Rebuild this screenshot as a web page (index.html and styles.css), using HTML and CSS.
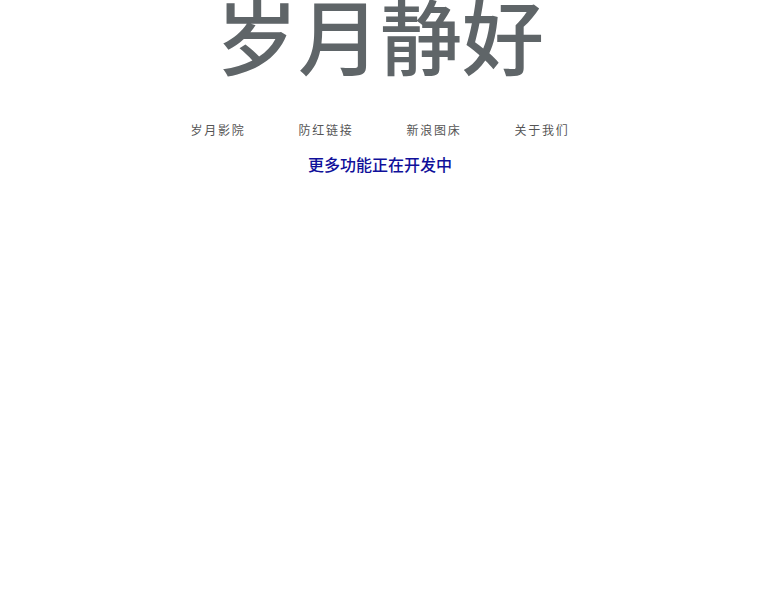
FILE: index.html
```html
<!DOCTYPE html>
<html lang="zh-CN">
<head>
<meta charset="utf-8">
<title>岁月静好</title>
<link rel="stylesheet" href="styles.css">
</head>
<body>
<div class="page">
  <h1 class="title">岁月静好</h1>
  <nav class="nav">
    <a class="nav-item" href="#">岁月影院</a>
    <a class="nav-item" href="#">防红链接</a>
    <a class="nav-item" href="#">新浪图床</a>
    <a class="nav-item" href="#">关于我们</a>
  </nav>
  <p class="notice">更多功能正在开发中</p>
</div>
</body>
</html>
```
FILE: styles.css
```css
html, body {
  margin: 0;
  padding: 0;
  background: #ffffff;
}
.page {
  width: 760px;
  display: flex;
  flex-direction: column;
  align-items: center;
  font-family: "Noto Sans CJK SC", "Noto Sans", sans-serif;
}
.title {
  margin: -14px 0 0 0;
  font-size: 82px;
  line-height: 96px;
  font-weight: 500;
  color: #5f6568;
  letter-spacing: 0;
}
.nav {
  display: flex;
  margin-top: 40px;
}
.nav-item {
  width: 108px;
  text-align: center;
  font-size: 12px;
  line-height: 16px;
  letter-spacing: 1.8px;
  color: #555555;
  text-decoration: none;
}
.notice {
  margin: 15px 0 0 0;
  font-size: 16px;
  line-height: 22px;
  font-weight: 500;
  color: #10109a;
}
```
